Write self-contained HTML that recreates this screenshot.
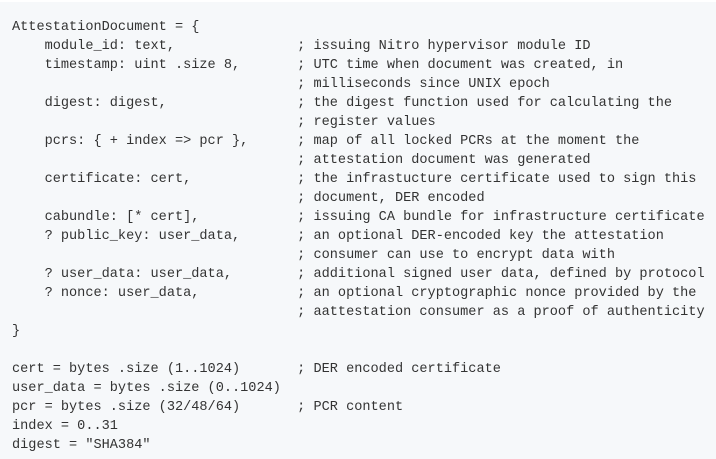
<!DOCTYPE html>
<html><head><style>
html,body{margin:0;padding:0;}
body{width:716px;height:459px;background:#f6f8fa;overflow:hidden;position:relative;}
.top{position:absolute;left:0;top:0;width:716px;height:2px;background:#fff;}
pre{position:absolute;left:12px;top:18px;margin:0;font-family:"Liberation Mono",monospace;font-size:13.58px;line-height:19px;color:#333;white-space:pre;}
</style></head><body><div class="top"></div><pre>AttestationDocument = {
    module_id: text,               ; issuing Nitro hypervisor module ID
    timestamp: uint .size 8,       ; UTC time when document was created, in
                                   ; milliseconds since UNIX epoch
    digest: digest,                ; the digest function used for calculating the
                                   ; register values
    pcrs: { + index => pcr },      ; map of all locked PCRs at the moment the
                                   ; attestation document was generated
    certificate: cert,             ; the infrastucture certificate used to sign this
                                   ; document, DER encoded
    cabundle: [* cert],            ; issuing CA bundle for infrastructure certificate
    ? public_key: user_data,       ; an optional DER-encoded key the attestation
                                   ; consumer can use to encrypt data with
    ? user_data: user_data,        ; additional signed user data, defined by protocol
    ? nonce: user_data,            ; an optional cryptographic nonce provided by the
                                   ; aattestation consumer as a proof of authenticity
}

cert = bytes .size (1..1024)       ; DER encoded certificate
user_data = bytes .size (0..1024)
pcr = bytes .size (32/48/64)       ; PCR content
index = 0..31
digest = "SHA384"</pre></body></html>
